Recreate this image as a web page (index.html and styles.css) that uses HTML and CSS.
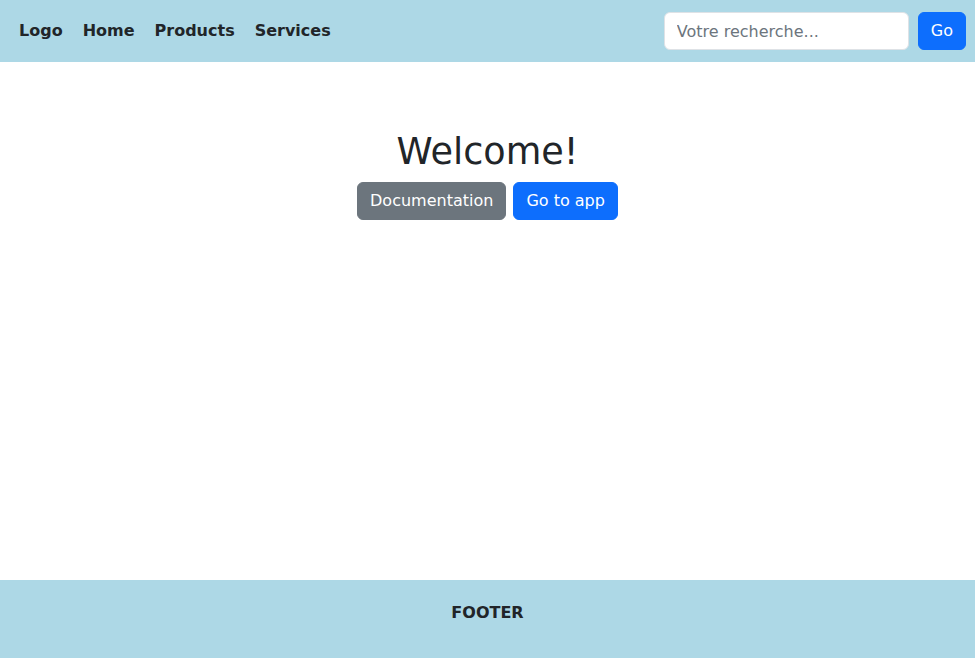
FILE: index.html
```html
<!DOCTYPE html>
<html lang="fr">

<head>
  <meta charset="UTF-8">
  <meta name="viewport" content="width=device-width, initial-scale=1.0">
  <title>Welcome</title>
  <link rel="stylesheet" href="styles.css">
</head>

<body>
  <!-- Barre de navigation -->
  <header class="topbar">
    <nav class="nav">
      <a href="#" class="nav-link">Logo</a>
      <a href="#" class="nav-link">Home</a>
      <a href="#" class="nav-link">Products</a>
      <a href="#" class="nav-link">Services</a>
    </nav>
    <form class="search">
      <input type="text" class="search-input" placeholder="Votre recherche...">
      <button type="button" class="btn btn-primary">Go</button>
    </form>
  </header>

  <main class="content">
    <h1>Welcome!</h1>
    <div class="actions">
      <a href="#" class="btn btn-secondary">Documentation</a>
      <a href="#" class="btn btn-primary">Go to app</a>
    </div>
  </main>

  <footer class="footer">
    <p>FOOTER</p>
  </footer>
</body>

</html>
```

FILE: styles.css
```css
* {
  box-sizing: border-box;
}

body {
  font-family: "DejaVu Sans", sans-serif;
  font-size: 16px;
  line-height: 1.5;
  color: #212529;
  margin: 0;
  padding: 0;
  min-height: 100vh;
  display: flex;
  flex-direction: column;
}

.topbar {
  background-color: #add8e6;
  height: 62px;
  display: flex;
  align-items: center;
  justify-content: space-between;
  padding: 0 9px 0 19px;
}

.nav {
  display: flex;
  gap: 20px;
}

.nav-link {
  color: #212529;
  font-weight: bold;
  text-decoration: none;
}

.search {
  display: flex;
  gap: 9px;
}

.search-input {
  width: 245px;
  height: 38px;
  padding: 6px 12px;
  font-family: inherit;
  font-size: 16px;
  color: #212529;
  border: 1px solid #dee2e6;
  border-radius: 6px;
  background: #fff;
}

.search-input::placeholder {
  color: #6c757d;
}

.btn {
  display: inline-block;
  height: 38px;
  padding: 6px 12px;
  font-family: inherit;
  font-size: 16px;
  line-height: 24px;
  color: #fff;
  border: 1px solid transparent;
  border-radius: 6px;
  text-decoration: none;
  cursor: pointer;
}

.btn-primary {
  background-color: #0d6efd;
  border-color: #0d6efd;
}

.btn-secondary {
  background-color: #6c757d;
  border-color: #6c757d;
}

.content {
  flex: 1;
  padding-top: 68px;
  text-align: center;
}

h1 {
  font-size: 36.6px;
  font-weight: 500;
  line-height: 1.2;
  margin: 0 0 8px;
}

.actions {
  display: flex;
  justify-content: center;
  gap: 7px;
}

.footer {
  background-color: #add8e6;
  height: 78px;
  padding-top: 21px;
  text-align: center;
}

.footer p {
  margin: 0;
  font-weight: bold;
}
```
